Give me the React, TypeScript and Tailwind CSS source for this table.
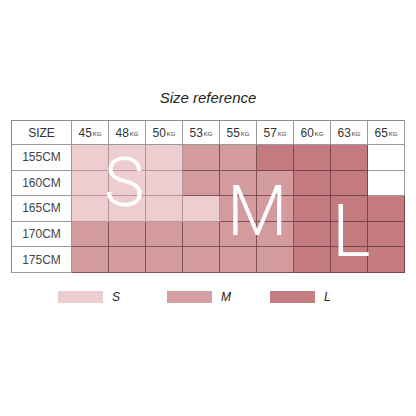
import React from 'react';

// S = light, M = medium, L = dark, W = empty
const HEIGHTS = ['155CM', '160CM', '165CM', '170CM', '175CM'];
const WEIGHTS = ['45', '48', '50', '53', '55', '57', '60', '63', '65'];

const GRID: string[][] = [
    ['S', 'S', 'S', 'M', 'M', 'L', 'L', 'L', 'W'],
    ['S', 'S', 'S', 'M', 'M', 'M', 'L', 'L', 'W'],
    ['S', 'S', 'S', 'S', 'M', 'M', 'L', 'L', 'L'],
    ['M', 'M', 'M', 'M', 'M', 'M', 'L', 'L', 'L'],
    ['M', 'M', 'M', 'M', 'M', 'M', 'L', 'L', 'L'],
];

const cellClass: Record<string, string> = {
    S: 'bg-[#edcdd0] border-[#b79598]',
    M: 'bg-[#d49b9f] border-[#7f5358]',
    L: 'bg-[#c47b80] border-[#7a454b]',
    W: 'bg-white border-[#9a9a9a]',
};

const legend = [
    { label: 'S', color: 'bg-[#edcdd0]', width: 'w-[109px]' },
    { label: 'M', color: 'bg-[#d49fa3]', width: 'w-[103px]' },
    { label: 'L', color: 'bg-[#c47e82]', width: 'w-[60px]' },
];

export default function App() {
    return (
        <div
            className="w-[416px] h-[416px] bg-white flex flex-col items-center pt-[88px] text-[#333]"
            style={{ fontFamily: '"Liberation Sans", Arial, sans-serif' }}
        >
            {/* Title */}
            <h1 className="italic text-[15px] leading-[20px] text-[#222]">Size reference</h1>

            {/* Table */}
            <div className="relative mt-[12px]">
                <div className="grid grid-cols-[60px_repeat(9,37px)] grid-rows-[24px_repeat(5,25.6px)] border-l border-t border-[#8c8c8c]">
                    <div className="flex items-center justify-center border-r border-b border-[#9a9a9a] text-[12px]">SIZE</div>
                    {WEIGHTS.map((w) => (
                        <div key={w} className="flex items-center justify-center border-r border-b border-[#9a9a9a]">
                            <span className="text-[12px] leading-none">{w}</span>
                            <span className="text-[6px] leading-none mt-[3px] ml-[1px]">KG</span>
                        </div>
                    ))}
                    {HEIGHTS.map((h, r) => (
                        <React.Fragment key={h}>
                            <div className="flex items-center justify-center border-r border-b border-[#9a9a9a] text-[12px] text-[#444]">
                                {h}
                            </div>
                            {GRID[r].map((c, i) => (
                                <div key={i} className={`border-r border-b ${cellClass[c]}`} />
                            ))}
                        </React.Fragment>
                    ))}
                </div>

                {/* Big size letters */}
                <span className="absolute left-[93px] top-[29px] text-white text-[68px] font-light leading-none" style={{ fontFamily: 'Roboto, "Liberation Sans", sans-serif' }}>S</span>
                <span className="absolute left-[216px] top-[56px] text-white text-[70px] font-light leading-none" style={{ fontFamily: 'Roboto, "Liberation Sans", sans-serif' }}>M</span>
                <span className="absolute left-[321px] top-[75px] text-white text-[73px] font-light leading-none" style={{ fontFamily: 'Roboto, "Liberation Sans", sans-serif' }}>L</span>
            </div>

            {/* Legend */}
            <div className="flex items-center self-start ml-[58px] mt-[15px]">
                {legend.map((l) => (
                    <div key={l.label} className={`flex items-center gap-[9px] ${l.width}`}>
                        <div className={`w-[45px] h-[12px] shrink-0 ${l.color}`} />
                        <span className="italic text-[12px] text-[#222]">{l.label}</span>
                    </div>
                ))}
            </div>
        </div>
    );
}
